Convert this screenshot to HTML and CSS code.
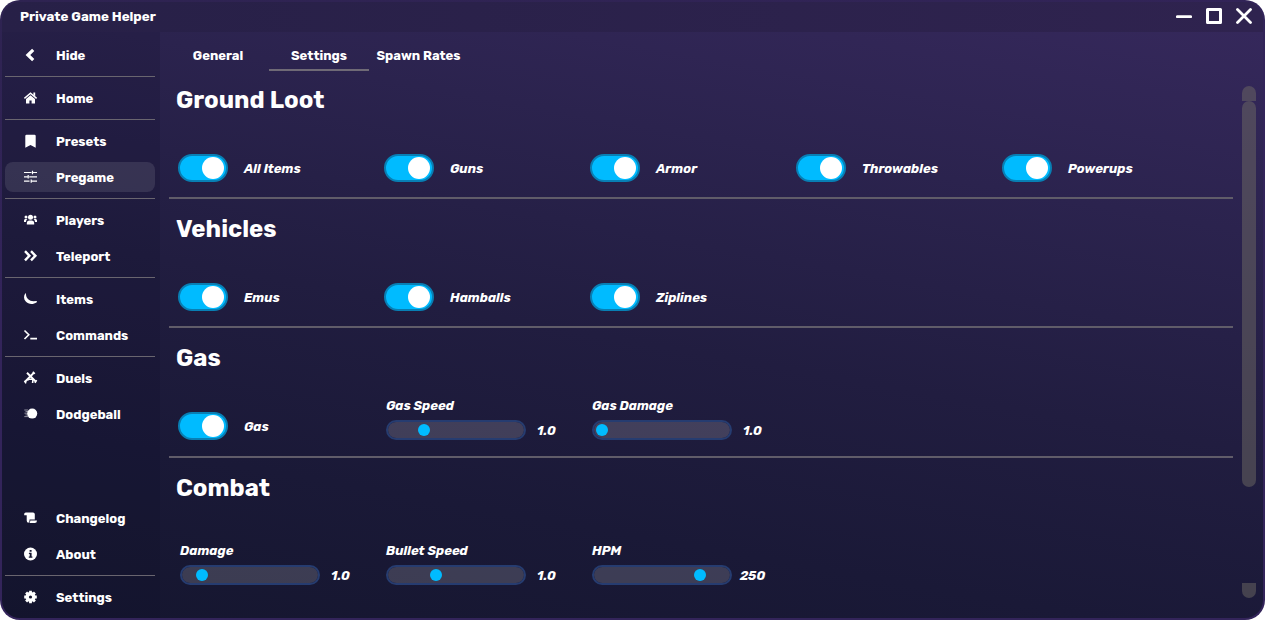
FILE: index.html
```html
<!DOCTYPE html>
<html lang="en">
<head>
<meta charset="utf-8">
<title>Private Game Helper</title>
<link rel="stylesheet" href="styles.css">
</head>
<body>
<div class="window">
  <header class="titlebar">
    <span class="app-name">Private Game Helper</span>
    <div class="controls">
      <svg class="ctl" viewBox="0 0 16 16"><path d="M1.3 8.7H14.7" stroke-width="2.7"/></svg>
      <svg class="ctl" viewBox="0 0 16 16"><rect x="1.5" y="1.5" width="13" height="13" stroke-width="3"/></svg>
      <svg class="ctl" viewBox="0 0 16 16"><path d="M1.5 1.5L14.5 14.5M14.5 1.5L1.5 14.5" stroke-width="2.8"/></svg>
    </div>
  </header>
  <div class="body">
    <nav class="sidebar">
      <a class="item"><svg class="icon" viewBox="0 0 13 13"><path class="line" d="M9.2 .9L3.9 6L9.2 11.1" stroke-width="3.2"/></svg><span>Hide</span></a>
      <hr class="rule">
      <a class="item"><svg class="icon" viewBox="0 0 13 13"><path class="line" d="M.4 6.4L6.5 1.2L12.6 6.4" stroke-width="1.4"/><path d="M9.4 .6h1.8v3.8L9.4 3z"/><path d="M6.5 3.2L2 7.1V11.6h3.4V8.4h2.2V11.6H11V7.1z"/></svg><span>Home</span></a>
      <hr class="rule">
      <a class="item"><svg class="icon" viewBox="0 0 13 13"><path d="M1.3 .9Q1.3 -.3 2.5 -.3h8q1.2 0 1.2 1.2V12.7L6.5 9.9 1.3 12.7z"/></svg><span>Presets</span></a>
      <a class="item active"><svg class="icon" viewBox="0 0 13 13"><path class="line thin" d="M0 1.5H7.5M9 1.5H13M8.5 -.2V3.2M0 5.8H3.6M5.2 5.8H13M4.2 4.1V7.5M0 10.1H5.5M7.2 10.1H13M7.2 8.4V11.8"/></svg><span>Pregame</span></a>
      <hr class="rule">
      <a class="item"><svg class="icon" viewBox="0 0 13 13"><circle cx="6.5" cy="3.2" r="2.5"/><circle cx="2" cy="3" r="1.5"/><circle cx="11" cy="3" r="1.5"/><path d="M2.8 10.6V8.9Q2.8 6.4 5 6.4h3Q10.2 6.4 10.2 8.9v1.7zM0 7.9V6.6Q0 5.1 1.3 5.1H3.4Q2 6.4 2 7.9zM13 7.9V6.6q0-1.5-1.3-1.5H9.6Q11 6.4 11 7.9z"/></svg><span>Players</span></a>
      <a class="item"><svg class="icon" viewBox="0 0 13 13"><path class="line" d="M1 1.2L5.4 5.8L1 10.4M7 1.2L11.4 5.8L7 10.4" stroke-width="2.4"/></svg><span>Teleport</span></a>
      <hr class="rule">
      <a class="item"><svg class="icon" viewBox="0 0 13 13"><path d="M1.2 .4Q2.1.2 2 1.4C2.3 5.4 5.2 8 9.5 8.2L12.5 8Q13.2 8.4 12.8 9.3C9 11.9 4.3 11.5 1.8 8.6C-.4 6-.5 2.8 1.2 .4z"/></svg><span>Items</span></a>
      <a class="item"><svg class="icon" viewBox="0 0 13 13"><path class="line" d="M.5 1.5L4.8 5.8L.5 10M6.3 9.6H13" stroke-width="1.6"/></svg><span>Commands</span></a>
      <hr class="rule">
      <a class="item"><svg class="icon" viewBox="0 0 13 13"><path class="line" d="M3 .8L11.8 9.6M10 .6L1 9.8" stroke-width="2"/><path class="line" d="M8.8 -.2L10.8 1.8M3.8 7L4.6 8.4M9 7L8.6 11M.5 8.8L2 11.3M12.6 8.2L11 10.8M4 7.2H9.4" stroke-width="1.6"/></svg><span>Duels</span></a>
      <a class="item"><svg class="icon" viewBox="0 0 13 13"><circle cx="8.2" cy="5.6" r="5"/><path class="line trail" d="M.3 2H4M1.5 3.6H4M.5 5.2H4M1.5 6.9H4M.3 8.6H4"/></svg><span>Dodgeball</span></a>
      <div class="spacer"></div>
      <a class="item"><svg class="icon" viewBox="0 0 13 13"><path d="M.2 3.2V2.1Q.2 .4 1.8 .4H9q1.8 0 1.8 1.9V7.6H5.5V9q0 1.8-1.4 1.8Q2.7 10.6 2.7 8.6V3.2z"/><path d="M6.3 8.5H13q0 2.6-2.3 2.6H5.3Q6.3 10.1 6.3 8.5z"/></svg><span>Changelog</span></a>
      <a class="item"><svg class="icon" viewBox="0 0 13 13"><circle cx="6.5" cy="6" r="6.5"/><path class="cut" d="M5.6 1.9h2v1.9h-2zM4.9 4.8h2.7v3.6h.8v1.3H4.8V8.4h.9V6.1h-.8z"/></svg><span>About</span></a>
      <hr class="rule">
      <a class="item"><svg class="icon" viewBox="0 0 13 13"><circle cx="6.5" cy="6" r="5"/><path class="line" d="M6.5 -.3V12.3M.2 6H12.8M2.1 1.6L10.9 10.4M10.9 1.6L2.1 10.4" stroke-width="2.8"/><circle class="cut" cx="6.5" cy="6" r="1.6"/></svg><span>Settings</span></a>
    </nav>
    <main class="main">
      <div class="tabs">
        <a class="tab">General</a>
        <a class="tab selected">Settings</a>
        <a class="tab wide">Spawn Rates</a>
      </div>
      <div class="scroll">
        <div class="sections">
          <section class="section">
            <h2>Ground Loot</h2>
            <div class="options">
              <label class="option"><i class="toggle"></i><span>All Items</span></label>
              <label class="option"><i class="toggle"></i><span>Guns</span></label>
              <label class="option"><i class="toggle"></i><span>Armor</span></label>
              <label class="option"><i class="toggle"></i><span>Throwables</span></label>
              <label class="option"><i class="toggle"></i><span>Powerups</span></label>
            </div>
          </section>
          <section class="section">
            <h2>Vehicles</h2>
            <div class="options">
              <label class="option"><i class="toggle"></i><span>Emus</span></label>
              <label class="option"><i class="toggle"></i><span>Hamballs</span></label>
              <label class="option"><i class="toggle"></i><span>Ziplines</span></label>
            </div>
          </section>
          <section class="section tall">
            <h2>Gas</h2>
            <div class="options">
              <label class="option"><i class="toggle"></i><span>Gas</span></label>
              <div class="range"><span>Gas Speed</span><div class="row"><div class="track"><i class="thumb" style="margin-left:30px"></i></div><b>1.0</b></div></div>
              <div class="range"><span>Gas Damage</span><div class="row"><div class="track"><i class="thumb" style="margin-left:2px"></i></div><b>1.0</b></div></div>
            </div>
          </section>
          <section class="section last">
            <h2>Combat</h2>
            <div class="options">
              <div class="range"><span>Damage</span><div class="row"><div class="track"><i class="thumb" style="margin-left:14px"></i></div><b>1.0</b></div></div>
              <div class="range"><span>Bullet Speed</span><div class="row"><div class="track"><i class="thumb" style="margin-left:42px"></i></div><b>1.0</b></div></div>
              <div class="range"><span>HPM</span><div class="row"><div class="track"><i class="thumb" style="margin-left:100px"></i></div><b>250</b></div></div>
            </div>
          </section>
        </div>
        <div class="scrollbar"><i class="cap-top"></i><i class="bar"></i><i class="cap-bottom"></i></div>
      </div>
    </main>
  </div>
</div>
</body>
</html>
```

FILE: styles.css
```css
* { box-sizing: border-box; }
body {
  margin: 0;
  background: #fff;
  color: #fff;
  font: 700 13px/16px Rubik, Inter, Roboto, sans-serif;
}
.window {
  width: 1265px;
  height: 620px;
  padding: 2px;
  border-radius: 20px;
  overflow: hidden;
  background: linear-gradient(170deg, #2e2351, #33245a 35%, #33245a);
  display: flex;
  flex-direction: column;
}
.titlebar {
  height: 30px;
  flex: none;
  border-radius: 18px 18px 0 0;
  background: linear-gradient(90deg, #272047, #2f234f);
  display: flex;
  justify-content: space-between;
  align-items: center;
  padding: 0 11px 2px 18px;
}
.app-name { padding-top: 2px; font-size: 13.333px; }
.controls { display: flex; gap: 14px; }
.ctl { width: 16px; height: 16px; fill: none; stroke: #fff; stroke-linecap: round; stroke-linejoin: round; }
.body {
  flex: 1;
  display: flex;
  border-radius: 0 0 18px 18px;
  overflow: hidden;
  background: linear-gradient(190deg, #35285b 0%, #2b234e 25%, #211d40 52%, #1a1937 76%, #15162f 100%);
}
.sidebar {
  width: 158px;
  padding: 8px 5px 6px 3px;
  display: flex;
  flex-direction: column;
  gap: 6px;
  background: rgba(10, 14, 35, .16);
}
.item {
  height: 30px;
  flex: none;
  border-radius: 8px;
  display: flex;
  align-items: center;
  padding-left: 19px;
  gap: 19px;
}
.item span { padding-top: 1px; }
.item.active { background: rgba(255, 255, 255, .1); }
.icon { width: 13px; height: 13px; fill: #fff; overflow: visible; }
.line { fill: none; stroke: #fff; }
.thin { stroke-width: 1.2; }
.trail { stroke-width: .9; opacity: .6; }
.icon .cut { fill: #15162f; }
.rule { width: 150px; height: 1px; margin: 0; border: 0; flex: none; background: #69656f; }
.spacer { flex: 1; }
.main { flex: 1; display: flex; flex-direction: column; padding: 0 7px 0 8px; }
.tabs { display: flex; gap: 1px; height: 39px; }
.tab { width: 100px; text-align: center; padding-top: 16px; border-bottom: 2px solid transparent; }
.tab.wide { padding-right: 3px; }
.tab.selected { border-color: #6f6a76; }
.scroll { flex: 1; display: flex; justify-content: space-between; }
.sections { width: 1065px; padding-left: 1px; }
.section { height: 128px; border-bottom: 2px solid #605c69; margin-bottom: 1px; padding-top: 13px; }
.section.tall { height: 129px; }
.section.last { border: 0; }
h2 { margin: 0 0 0 7px; font-size: 24px; line-height: 32px; font-weight: 700; }
.options { display: flex; height: 66px; align-items: flex-end; padding-left: 9px; }
.last .options { height: 81px; }
.option { width: 206px; height: 28px; display: flex; align-items: center; gap: 16px; font-style: italic; }
.option span { padding-top: 1px; }
.toggle {
  width: 50px; height: 28px; padding: 1px 2px;
  border: 2px solid #087fb4; border-radius: 14px; background: #00bbff;
  display: flex; justify-content: flex-end;
}
.toggle::after { content: ""; width: 22px; height: 22px; border-radius: 50%; background: #fff; }
.range { width: 206px; padding-left: 2px; font-style: italic; }
.row { display: flex; align-items: center; margin-top: 6px; }
.row b { width: 41px; padding-top: 2px; text-align: center; font-weight: 700; }
.track { width: 140px; height: 20px; border: 2px solid #263c70; border-radius: 10px; background: rgba(255, 255, 255, .16); background-clip: padding-box; padding: 2px 0; }
.thumb { display: block; width: 12px; height: 12px; border-radius: 50%; background: #00bbff; }
.scrollbar { width: 14px; margin: 15px 0 20px; display: flex; flex-direction: column; }
.scrollbar i { background: rgba(110, 105, 100, .5); }
.cap-top { height: 15px; border-radius: 7px 7px 0 0; }
.bar { height: 386px; border-radius: 7px; }
.cap-bottom { height: 15px; margin-top: auto; border-radius: 0 0 7px 7px; }
```
